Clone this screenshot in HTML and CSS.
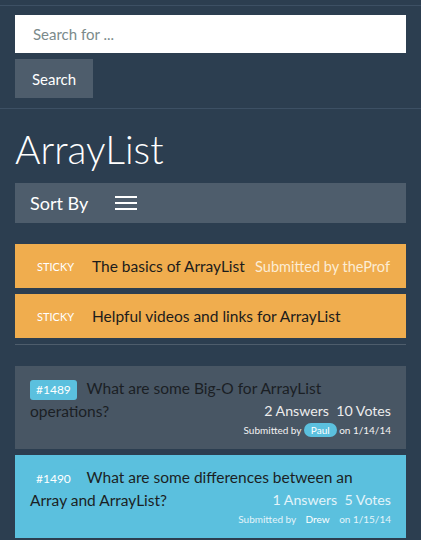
FILE: index.html
```html
<!DOCTYPE html>
<html>
<head>
<meta charset="utf-8">
<link rel="stylesheet" href="styles.css">
</head>
<body>
<div class="topline"></div>
<form class="search">
  <input class="search-input" type="text" placeholder="Search for ...">
  <button class="search-btn" type="button">Search</button>
</form>
<main class="content">
  <h1 class="title">ArrayList</h1>
  <div class="sortbar">
    <span class="sort-label">Sort By</span>
    <svg class="hamburger" width="22" height="14" viewBox="0 0 22 14"><rect x="0" y="0" width="22" height="2" fill="#fff"/><rect x="0" y="6" width="22" height="2" fill="#fff"/><rect x="0" y="12" width="22" height="2" fill="#fff"/></svg>
  </div>
  <div class="stickies">
    <div class="sticky">
      <span class="sticky-label">STICKY</span>
      <span class="sticky-title">The basics of ArrayList</span>
      <span class="sticky-by">Submitted by theProf</span>
    </div>
    <div class="sticky">
      <span class="sticky-label">STICKY</span>
      <span class="sticky-title">Helpful videos and links for ArrayList</span>
    </div>
  </div>
  <hr class="divider">
  <div class="questions">
    <div class="q q-dark">
      <div class="q-title"><span class="q-num">#1489</span> What are some Big-O for ArrayList operations?<div class="q-meta"><div class="q-stats">2 Answers&nbsp; 10 Votes</div><div class="q-by">Submitted by <span class="user">Paul</span> on 1/14/14</div></div></div>
    </div>
    <div class="q q-info">
      <div class="q-title"><span class="q-num">#1490</span> What are some differences between an Array and ArrayList?<div class="q-meta"><div class="q-stats">1 Answers&nbsp; 5 Votes</div><div class="q-by">Submitted by <span class="user">Drew</span> on 1/15/14</div></div></div>
    </div>
  </div>
</main>
</body>
</html>
```
FILE: styles.css
```css
html, body {
  margin: 0;
  padding: 0;
  background: #2c3e50;
  font-family: Lato, "Open Sans", sans-serif;
  color: #fff;
}
.topline {
  margin-top: 5px;
  border-top: 1px solid #3d5064;
}
.search {
  padding: 9px 15px 10px;
  border-bottom: 1px solid #3d5064;
  margin: 0;
}
.search-input {
  display: block;
  box-sizing: border-box;
  width: 100%;
  height: 38px;
  margin: 0;
  border: none;
  border-radius: 0;
  padding: 0 18px;
  font-family: Lato, sans-serif;
  font-size: 15px;
  color: #2c3e50;
  background: #fff;
  outline: none;
}
.search-input::placeholder {
  color: #7b8a8b;
}
.search-btn {
  display: block;
  margin-top: 6px;
  height: 39px;
  padding: 0 17px;
  border: none;
  border-radius: 0;
  background: #4e5d6c;
  color: #fff;
  font-family: Lato, sans-serif;
  font-size: 15px;
}
.content {
  padding: 0 15px;
}
.title {
  margin: 19px 0 12px;
  font-size: 39px;
  line-height: 43px;
  font-weight: 300;
  color: #fff;
}
.sortbar {
  display: flex;
  align-items: center;
  height: 40px;
  padding: 0 15px;
  background: #4e5d6c;
}
.sort-label {
  font-size: 18px;
  color: #fff;
}
.hamburger {
  display: block;
  margin-left: 27px;
}
.stickies {
  margin-top: 21px;
  display: flex;
  flex-direction: column;
  gap: 6px;
}
.sticky {
  display: flex;
  align-items: center;
  height: 44px;
  padding: 0 16px 0 22px;
  background: #f0ad4e;
  white-space: nowrap;
}
.sticky-label {
  width: 55px;
  flex: none;
  font-size: 11px;
  color: #fff;
}
.sticky-title {
  font-size: 15.5px;
  color: #1c1c1c;
}
.sticky-by {
  margin-left: auto;
  font-size: 14.5px;
  color: #fcecd4;
}
.divider {
  margin: 6px 0 21px;
  border: none;
  border-top: 1px solid #4e5d6c;
  height: 0;
}
.questions {
  display: flex;
  flex-direction: column;
  gap: 6px;
}
.q {
  display: flow-root;
  padding: 11px 15px 11px;
}
.q-dark {
  background: #485664;
}
.q-info {
  background: #5bc0de;
}
.q-title {
  font-size: 15.5px;
  line-height: 22px;
  color: #1b1f24;
}
.q-num {
  display: inline-block;
  box-sizing: border-box;
  height: 20px;
  line-height: 20px;
  padding: 0 6px;
  margin-right: 6px;
  border-radius: 3px;
  background: #5bc0de;
  color: #fff;
  font-size: 12px;
  vertical-align: 0px;
}
.q-meta {
  float: right;
  text-align: right;
  white-space: nowrap;
}
.q-stats {
  font-size: 14.2px;
  line-height: 22px;
  color: #ececec;
}
.q-info .q-stats {
  color: #e3f4fa;
}
.q-by {
  font-size: 10px;
  line-height: 16px;
  color: #f2f2f2;
}
.q-info .q-by {
  color: #e3f4fa;
}
.user {
  display: inline-block;
  height: 14px;
  line-height: 14px;
  padding: 0 7px;
  border-radius: 7px;
  background: #5bc0de;
  color: #fff;
}
```
